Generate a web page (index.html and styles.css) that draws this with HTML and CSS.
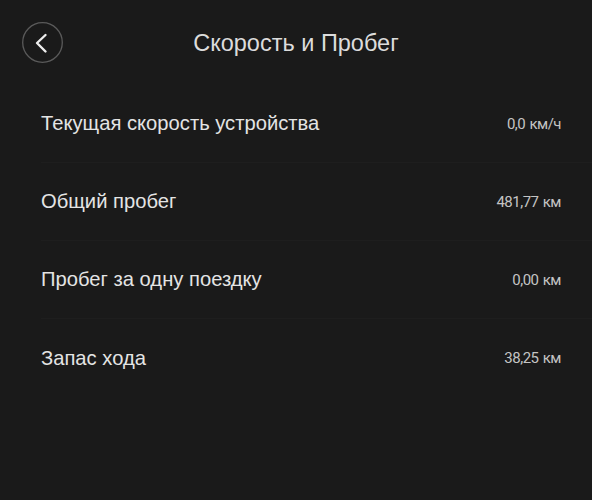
FILE: index.html
```html
<!DOCTYPE html>
<html lang="ru">
<head>
<meta charset="utf-8">
<link rel="stylesheet" href="styles.css">
</head>
<body>
<div class="page">
  <header class="header">
    <button class="back" aria-label="Назад">
      <svg width="41" height="41" viewBox="0 0 41 41">
        <circle cx="20.5" cy="20.5" r="19.8" fill="none" stroke="#5a5a5a" stroke-width="1.3"/>
        <path d="M23.5 13 L15 21 L23.5 29.5" fill="none" stroke="#ededed" stroke-width="2.4" stroke-linecap="round" stroke-linejoin="round"/>
      </svg>
    </button>
    <h1 class="title">Скорость и Пробег</h1>
  </header>
  <ul class="list">
    <li class="row"><span class="label">Текущая скорость устройства</span><span class="value">0,0 км/ч</span></li>
    <li class="row"><span class="label">Общий пробег</span><span class="value">481,77 км</span></li>
    <li class="row"><span class="label">Пробег за одну поездку</span><span class="value">0,00 км</span></li>
    <li class="row last"><span class="label">Запас хода</span><span class="value">38,25 км</span></li>
  </ul>
</div>
</body>
</html>
```

FILE: styles.css
```css
html, body {
  margin: 0;
  padding: 0;
  background: #1a1a1a;
  height: 100%;
}
body {
  font-family: "Liberation Sans", Arial, sans-serif;
  color: #e6e6e6;
}
.page {
  width: 592px;
  height: 500px;
  background: #1a1a1a;
}
.header {
  position: relative;
  height: 85px;
  display: flex;
  align-items: center;
  justify-content: center;
}
.back {
  position: absolute;
  left: 22px;
  top: 22px;
  width: 41px;
  height: 41px;
  padding: 0;
  border: 0;
  background: transparent;
  display: block;
}
.back svg { display: block; }
.title {
  margin: 0;
  font-size: 23.5px;
  font-weight: normal;
  color: #dcdcdc;
  padding-top: 1px;
}
.list {
  list-style: none;
  margin: 0;
  padding: 0 0 0 41px;
}
.row {
  height: 78px;
  display: flex;
  align-items: center;
  justify-content: space-between;
  padding-right: 31px;
  border-bottom: 1px solid #1e1e1e;
  box-sizing: border-box;
}
.row.last { border-bottom: 0; }
.label {
  font-size: 20.2px;
  color: #e4e4e4;
}
.value {
  font-family: Roboto, "Liberation Sans", sans-serif;
  font-size: 15px;
  color: #c4c4c4;
  letter-spacing: -0.5px;
  word-spacing: 1px;
}
```
